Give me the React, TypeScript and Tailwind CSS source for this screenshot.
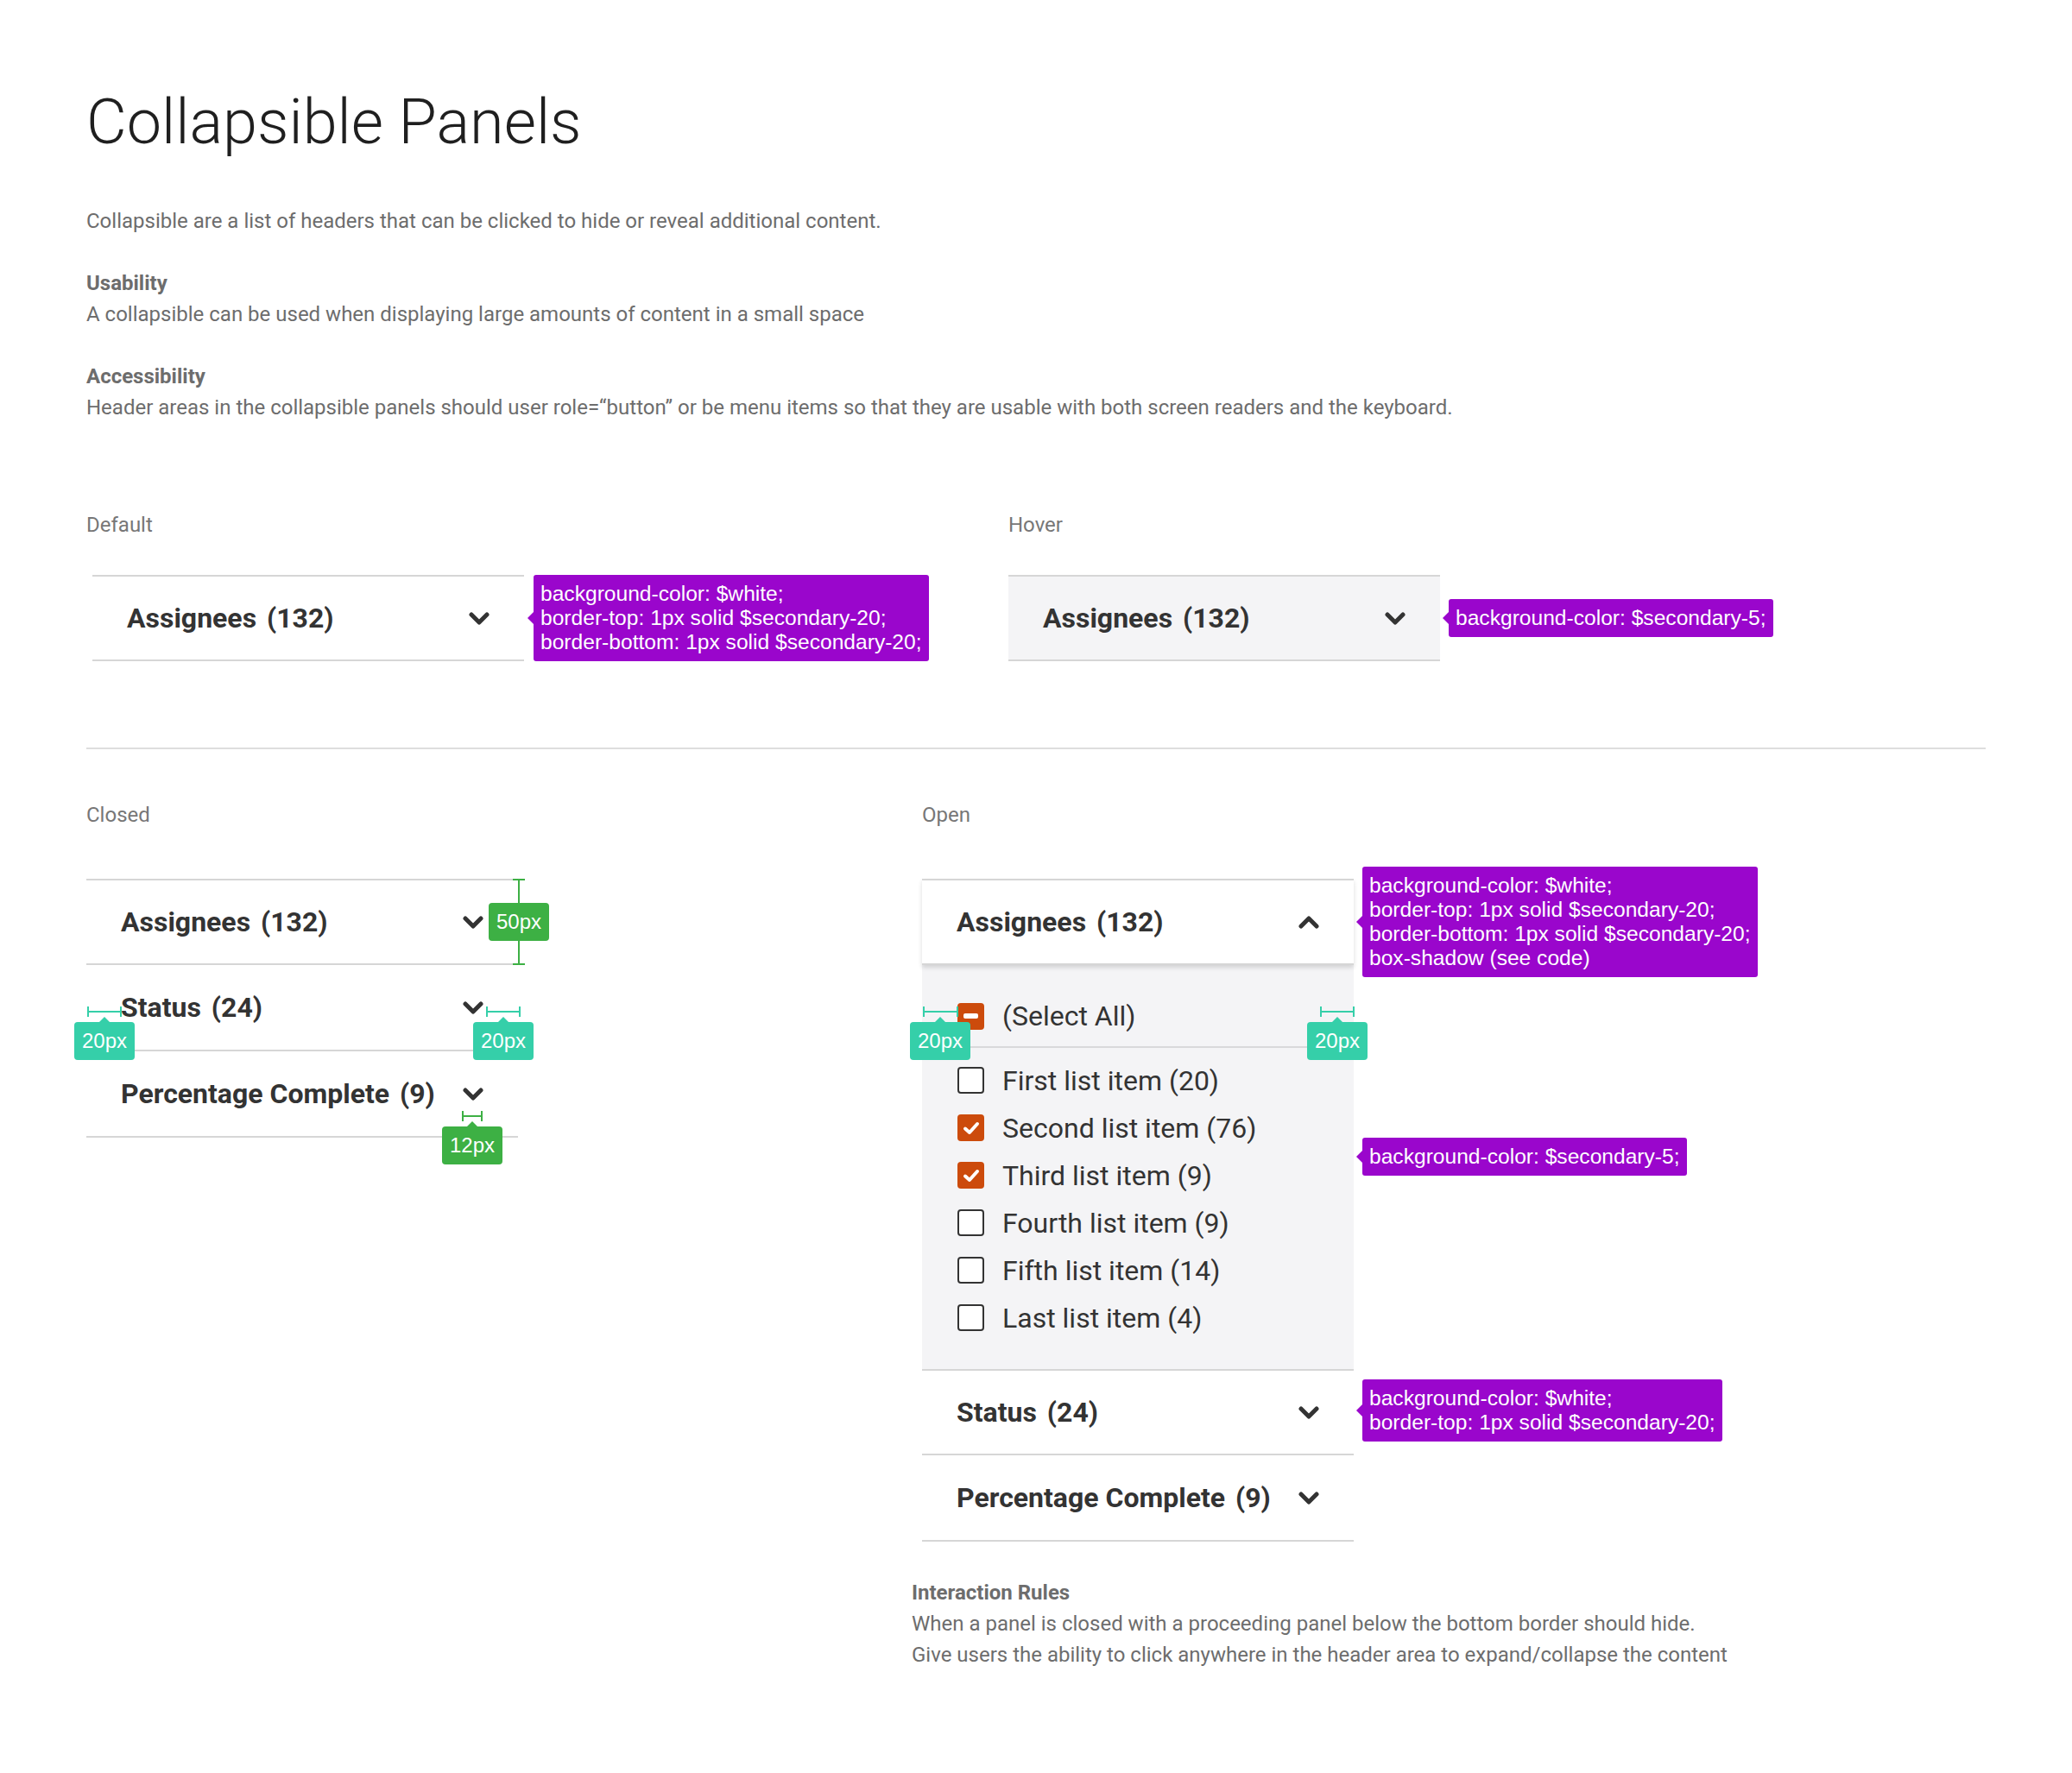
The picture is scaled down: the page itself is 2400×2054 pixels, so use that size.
import React from "react";

type Tone = "green" | "teal";
const toneBg: Record<Tone, string> = { green: "bg-[#3db044]", teal: "bg-[#35cfa9]" };
const toneTri: Record<Tone, string> = { green: "border-b-[#3db044]", teal: "border-b-[#35cfa9]" };

function Chevron({ up = false }: { up?: boolean }) {
  return (
    <svg width="24" height="15" viewBox="0 0 24 15" className="shrink-0">
      <polyline
        points={up ? "3,12 12,3 21,12" : "3,3 12,12 21,3"}
        fill="none"
        stroke="#333"
        strokeWidth="5"
        strokeLinecap="round"
        strokeLinejoin="round"
      />
    </svg>
  );
}

function Header({
  title,
  count,
  up = false,
  className = "",
}: {
  title: string;
  count: string;
  up?: boolean;
  className?: string;
}) {
  return (
    <div
      role="button"
      className={`flex h-[100px] w-[500px] items-center justify-between px-[40px] ${className}`}
    >
      <span className="text-[32px] font-bold leading-none text-[#333]">
        {title}
        <span className="ml-[12px]">{count}</span>
      </span>
      <Chevron up={up} />
    </div>
  );
}

function Tip({ lines, className = "" }: { lines: string[]; className?: string }) {
  return (
    <div
      className={`relative rounded-[3px] bg-[#9a06cc] px-[8px] py-[8px] font-['Liberation_Sans',Arial,sans-serif] text-[24.6px] leading-[28px] whitespace-nowrap text-white ${className}`}
    >
      <span className="absolute left-[-7px] top-1/2 h-0 w-0 -translate-y-1/2 border-y-[7px] border-r-[7px] border-y-transparent border-r-[#9a06cc]" />
      {lines.map((l) => (
        <div key={l}>{l}</div>
      ))}
    </div>
  );
}

function BadgeBox({ text, tone, pointer = false }: { text: string; tone: Tone; pointer?: boolean }) {
  return (
    <div
      className={`relative flex h-[44px] w-[70px] shrink-0 items-center justify-center rounded-[4px] ${toneBg[tone]} font-['Liberation_Sans',Arial,sans-serif] text-[24px] text-white`}
    >
      {pointer && (
        <span
          className={`absolute left-1/2 top-[-6px] h-0 w-0 -translate-x-1/2 border-x-[6px] border-b-[6px] border-x-transparent ${toneTri[tone]}`}
        />
      )}
      {text}
    </div>
  );
}

/* horizontal measurement: dimension line with a tag below it */
function HTag({
  text,
  tone,
  lineWidth,
  className = "",
}: {
  text: string;
  tone: Tone;
  lineWidth: string;
  className?: string;
}) {
  return (
    <div className={`absolute z-20 flex flex-col items-center gap-[6px] ${className}`}>
      <div className={`flex h-[12px] items-center ${lineWidth}`}>
        <div className={`h-[12px] w-[2px] ${toneBg[tone]}`} />
        <div className={`h-[2px] flex-1 ${toneBg[tone]}`} />
        <div className={`h-[12px] w-[2px] ${toneBg[tone]}`} />
      </div>
      <BadgeBox text={text} tone={tone} pointer />
    </div>
  );
}

/* vertical measurement: dimension line with a tag across it */
function VTag({ text, tone, className = "" }: { text: string; tone: Tone; className?: string }) {
  return (
    <div className={`absolute flex h-[100px] w-[70px] flex-col items-center ${className}`}>
      <div className={`h-[2px] w-[14px] ${toneBg[tone]}`} />
      <div className={`w-[2px] flex-1 ${toneBg[tone]}`} />
      <BadgeBox text={text} tone={tone} />
      <div className={`w-[2px] flex-1 ${toneBg[tone]}`} />
      <div className={`h-[2px] w-[14px] ${toneBg[tone]}`} />
    </div>
  );
}

function Check({ state }: { state: "none" | "checked" | "mixed" }) {
  if (state === "none") {
    return (
      <div className="h-[31px] w-[31px] shrink-0 rounded-[4px] border-[2px] border-[#333] bg-white" />
    );
  }
  return (
    <div className="flex h-[31px] w-[31px] shrink-0 items-center justify-center rounded-[4px] bg-[#cc4b0c]">
      {state === "checked" ? (
        <svg width="20" height="16" viewBox="0 0 20 16">
          <polyline
            points="3,8.5 8,13 17,3"
            fill="none"
            stroke="#fff"
            strokeWidth="4"
            strokeLinecap="round"
            strokeLinejoin="round"
          />
        </svg>
      ) : (
        <div className="h-[6px] w-[17px] rounded-[2px] bg-white" />
      )}
    </div>
  );
}

const items: { label: string; state: "none" | "checked" }[] = [
  { label: "First list item (20)", state: "none" },
  { label: "Second list item (76)", state: "checked" },
  { label: "Third list item (9)", state: "checked" },
  { label: "Fourth list item (9)", state: "none" },
  { label: "Fifth list item (14)", state: "none" },
  { label: "Last list item (4)", state: "none" },
];

export default function App() {
  return (
    <div className="min-h-[2054px] w-[2400px] bg-white font-['Roboto',sans-serif]">
      <div className="px-[100px]">
        <h1 className="pt-[106px] text-[72px] font-light leading-none text-[#1f1f1f]">
          Collapsible Panels
        </h1>

        <div className="mt-[60px] text-[24px] leading-[36px] text-[#6d6d6d]">
          <p>Collapsible are a list of headers that can be clicked to hide or reveal additional content.</p>
          <p className="mt-[36px] font-bold">Usability</p>
          <p>A collapsible can be used when displaying large amounts of content in a small space</p>
          <p className="mt-[36px] font-bold">Accessibility</p>
          <p>
            Header areas in the collapsible panels should user role=“button” or be menu items so that they are usable with both screen readers and the keyboard.
          </p>
        </div>

        {/* Default / Hover */}
        <div className="mt-[100px] flex">
          <div className="w-[1068px]">
            <div className="text-[24px] leading-[36px] text-[#777]">Default</div>
            <div className="mt-[40px] flex items-center gap-[11px] pl-[7px]">
              <Header
                title="Assignees"
                count="(132)"
                className="border-y-[2px] border-[#d6d6d6] bg-white"
              />
              <Tip
                lines={[
                  "background-color: $white;",
                  "border-top: 1px solid $secondary-20;",
                  "border-bottom: 1px solid $secondary-20;",
                ]}
              />
            </div>
          </div>
          <div>
            <div className="text-[24px] leading-[36px] text-[#777]">Hover</div>
            <div className="mt-[40px] flex items-center gap-[10px]">
              <Header
                title="Assignees"
                count="(132)"
                className="border-y-[2px] border-[#d6d6d6] bg-[#f4f4f6]"
              />
              <Tip lines={["background-color: $secondary-5;"]} />
            </div>
          </div>
        </div>

        <div className="mt-[100px] h-[2px] w-[2200px] bg-[#dedede]" />

        {/* Closed / Open */}
        <div className="mt-[58px] flex">
          <div className="w-[968px]">
            <div className="text-[24px] leading-[36px] text-[#777]">Closed</div>
            <div className="relative mt-[56px] flex w-[500px] flex-col">
              <Header title="Assignees" count="(132)" className="border-y-[2px] border-[#d6d6d6]" />
              <Header title="Status" count="(24)" className="border-b-[2px] border-[#d6d6d6]" />
              <Header title="Percentage Complete" count="(9)" className="border-b-[2px] border-[#d6d6d6]" />

              <VTag text="50px" tone="green" className="left-[466px] top-0" />
              <HTag text="20px" tone="teal" lineWidth="w-[40px]" className="left-[-14px] top-[148px]" />
              <HTag text="20px" tone="teal" lineWidth="w-[40px]" className="left-[448px] top-[148px]" />
              <HTag text="12px" tone="green" lineWidth="w-[24px]" className="left-[412px] top-[269px]" />
            </div>
          </div>

          <div>
            <div className="text-[24px] leading-[36px] text-[#777]">Open</div>
            <div className="relative mt-[56px] flex w-[500px] flex-col">
              <Header
                title="Assignees"
                count="(132)"
                up
                className="relative z-10 border-y-[2px] border-[#d6d6d6] bg-white shadow-[0_3px_5px_rgba(0,0,0,0.14)]"
              />
              <div className="bg-[#f4f4f6] pb-[32px] pt-[30px]">
                <div className="flex h-[58px] items-center gap-[21px] px-[41px] text-[32px] text-[#333]">
                  <Check state="mixed" />
                  <span>(Select All)</span>
                </div>
                <div className="mx-[40px] mt-[6px] h-[2px] bg-[#d9d9db]" />
                <div className="flex flex-col pt-[10px]">
                  {items.map((it) => (
                    <div
                      key={it.label}
                      className="flex h-[55px] items-center gap-[21px] px-[41px] text-[32px] text-[#333]"
                    >
                      <Check state={it.state} />
                      <span>{it.label}</span>
                    </div>
                  ))}
                </div>
              </div>
              <Header title="Status" count="(24)" className="border-y-[2px] border-[#d6d6d6] bg-white" />
              <Header title="Percentage Complete" count="(9)" className="border-b-[2px] border-[#d6d6d6] bg-white" />

              <HTag text="20px" tone="teal" lineWidth="w-[41px]" className="left-[-14px] top-[148px]" />
              <HTag text="20px" tone="teal" lineWidth="w-[40px]" className="left-[446px] top-[148px]" />

              {/* annotations */}
              <Tip
                className="!absolute left-[510px] top-[-14px]"
                lines={[
                  "background-color: $white;",
                  "border-top: 1px solid $secondary-20;",
                  "border-bottom: 1px solid $secondary-20;",
                  "box-shadow (see code)",
                ]}
              />
              <Tip className="!absolute left-[510px] top-[300px]" lines={["background-color: $secondary-5;"]} />
              <Tip
                className="!absolute left-[510px] top-[580px]"
                lines={["background-color: $white;", "border-top: 1px solid $secondary-20;"]}
              />
            </div>

            <div className="-ml-[12px] mt-[41px] text-[24px] leading-[36px] text-[#6d6d6d]">
              <p className="font-bold">Interaction Rules</p>
              <p>When a panel is closed with a proceeding panel below the bottom border should hide.</p>
              <p>Give users the ability to click anywhere in the header area to expand/collapse the content</p>
            </div>
          </div>
        </div>
      </div>
    </div>
  );
}
